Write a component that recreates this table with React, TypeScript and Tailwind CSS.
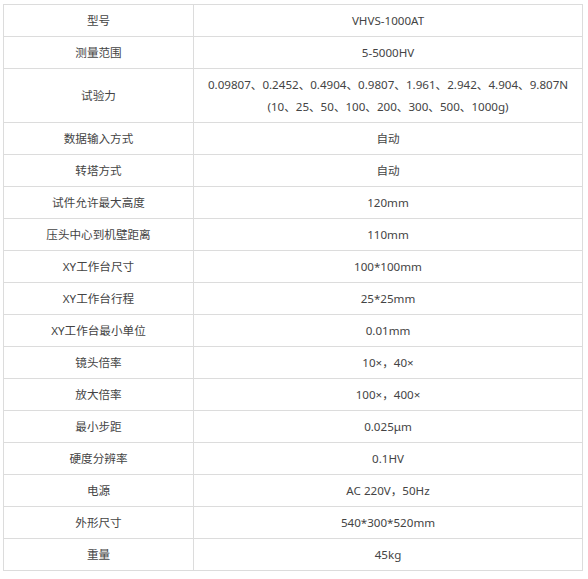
const rows: [string, string[]][] = [
  ["型号", ["VHVS-1000AT"]],
  ["测量范围", ["5-5000HV"]],
  [
    "试验力",
    [
      "0.09807、0.2452、0.4904、0.9807、1.961、2.942、4.904、9.807N",
      "(10、25、50、100、200、300、500、1000g)",
    ],
  ],
  ["数据输入方式", ["自动"]],
  ["转塔方式", ["自动"]],
  ["试件允许最大高度", ["120mm"]],
  ["压头中心到机壁距离", ["110mm"]],
  ["XY工作台尺寸", ["100*100mm"]],
  ["XY工作台行程", ["25*25mm"]],
  ["XY工作台最小单位", ["0.01mm"]],
  ["镜头倍率", ["10×，40×"]],
  ["放大倍率", ["100×，400×"]],
  ["最小步距", ["0.025μm"]],
  ["硬度分辨率", ["0.1HV"]],
  ["电源", ["AC 220V，50Hz"]],
  ["外形尺寸", ["540*300*520mm"]],
  ["重量", ["45kg"]],
]

export default function App() {
  return (
    <div className="bg-white pt-[4px] pl-[3px] w-[588px] h-[579px]">
      <table
        className="w-[580px] border-collapse text-[11.6px] leading-[22px] text-[#444]"
        style={{ fontFamily: '"Noto Sans", "Noto Sans CJK SC", sans-serif' }}
      >
        <tbody>
          {rows.map(([label, value]) => (
            <tr key={label}>
              <td className="w-[190px] border border-[#dcdcdc] px-2 py-[4.5px] text-center">{label}</td>
              <td className="border border-[#dcdcdc] px-2 py-[4.5px] text-center">
                {value.map((line) => (
                  <div key={line}>{line}</div>
                ))}
              </td>
            </tr>
          ))}
        </tbody>
      </table>
    </div>
  )
}
